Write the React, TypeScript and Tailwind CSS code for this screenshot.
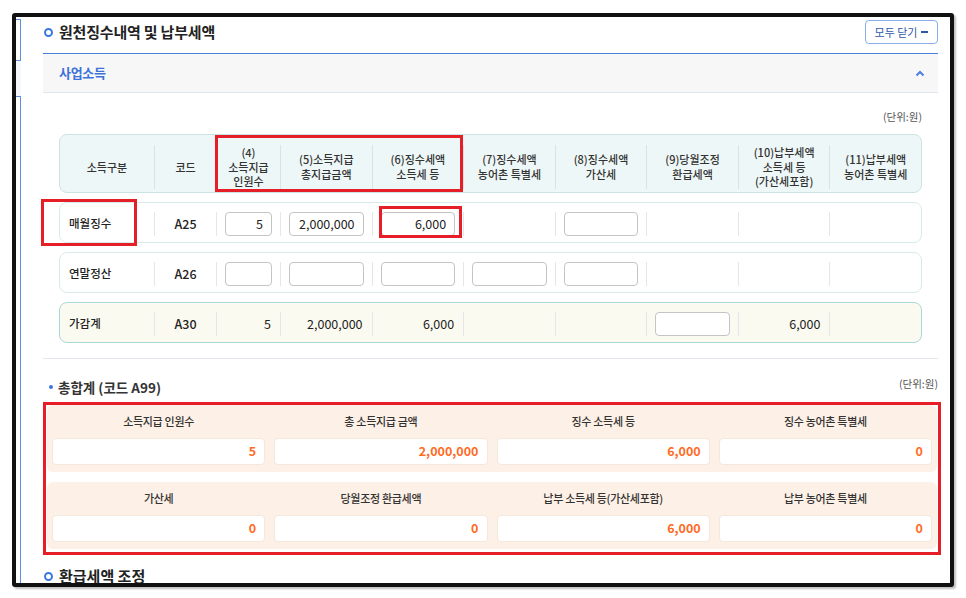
import React from "react";

type Cell =
  | { k: "label"; t: string }
  | { k: "code"; t: string }
  | { k: "input"; t: string; red?: boolean }
  | { k: "value"; t: string }
  | { k: "empty" };

const headers: string[][] = [
  ["소득구분"],
  ["코드"],
  ["(4)", "소득지급", "인원수"],
  ["(5)소득지급", "총지급금액"],
  ["(6)징수세액", "소득세 등"],
  ["(7)징수세액", "농어촌 특별세"],
  ["(8)징수세액", "가산세"],
  ["(9)당월조정", "환급세액"],
  ["(10)납부세액", "소득세 등", "(가산세포함)"],
  ["(11)납부세액", "농어촌 특별세"],
];

const rows: { cells: Cell[]; total?: boolean }[] = [
  {
    cells: [
      { k: "label", t: "매월징수" },
      { k: "code", t: "A25" },
      { k: "input", t: "5" },
      { k: "input", t: "2,000,000" },
      { k: "input", t: "6,000", red: true },
      { k: "empty" },
      { k: "input", t: "" },
      { k: "empty" },
      { k: "empty" },
      { k: "empty" },
    ],
  },
  {
    cells: [
      { k: "label", t: "연말정산" },
      { k: "code", t: "A26" },
      { k: "input", t: "" },
      { k: "input", t: "" },
      { k: "input", t: "" },
      { k: "input", t: "" },
      { k: "input", t: "" },
      { k: "empty" },
      { k: "empty" },
      { k: "empty" },
    ],
  },
  {
    total: true,
    cells: [
      { k: "label", t: "가감계" },
      { k: "code", t: "A30" },
      { k: "value", t: "5" },
      { k: "value", t: "2,000,000" },
      { k: "value", t: "6,000" },
      { k: "empty" },
      { k: "empty" },
      { k: "input", t: "" },
      { k: "value", t: "6,000" },
      { k: "empty" },
    ],
  },
];

const totals1 = [
  ["소득지급 인원수", "5"],
  ["총 소득지급 금액", "2,000,000"],
  ["징수 소득세 등", "6,000"],
  ["징수 농어촌 특별세", "0"],
];
const totals2 = [
  ["가산세", "0"],
  ["당월조정 환급세액", "0"],
  ["납부 소득세 등(가산세포함)", "6,000"],
  ["납부 농어촌 특별세", "0"],
];

const GRID = "grid grid-cols-[94px_62px_64px_repeat(7,minmax(0,1fr))]";

function Ring() {
  return <span className="inline-block h-[9px] w-[9px] rounded-full border-[2.5px] border-[#3a78e0]" />;
}

function RowCell({ c, i }: { c: Cell; i: number }) {
  const sep = i > 0 ? "border-l border-[#e6e6e6]" : "";
  if (c.k === "label")
    return <div className={`my-[9px] flex items-center pl-[9px] text-[11.5px] font-medium text-[#222] ${sep}`}>{c.t}</div>;
  if (c.k === "code")
    return <div className={`my-[9px] flex items-center justify-center text-[12.5px] font-medium text-[#222] ${sep}`}>{c.t}</div>;
  if (c.k === "value")
    return <div className={`my-[9px] flex items-center justify-end pr-[9px] text-[12.5px] text-[#222] ${sep}`}>{c.t}</div>;
  if (c.k === "input")
    return (
      <div className={`relative my-[9px] flex items-center px-[8px] ${sep}`}>
        <div className="flex h-[24px] w-full items-center justify-end rounded-[4px] border border-[#c4c4c4] bg-white pr-[8px] text-[12.5px] text-[#222]">
          {c.t}
        </div>
        {c.red && (
          <div className="pointer-events-none absolute left-[6px] top-[-6px] h-[32px] w-[83px] border-[3px] border-[#e61e27]" />
        )}
      </div>
    );
  return <div className={`my-[9px] ${sep}`} />;
}

function TotalPanel({ items }: { items: string[][] }) {
  return (
    <div className="grid grid-cols-4 gap-x-[9px] rounded-[6px] bg-[#fdf0e6] px-[5px] pb-[7px] pt-[8px]">
      {items.map(([l, v]) => (
        <div key={l} className="flex flex-col">
          <div className="text-center text-[11px] font-medium leading-[16px] tracking-[-0.3px] text-[#333]">{l}</div>
          <div className="mt-[9px] flex h-[27px] items-center justify-end rounded-[4px] border border-[#f6e7db] bg-white pr-[8px] text-[12.5px] font-semibold text-[#ff6a1f]">
            {v}
          </div>
        </div>
      ))}
    </div>
  );
}

export default function App() {
  return (
    <div className="h-[598px] w-[966px] bg-white pl-[12px] pt-[13px] font-['Noto_Sans_CJK_KR','Noto_Sans',sans-serif] text-[11px]">
      <div className="flex h-[574px] w-[942px] overflow-hidden rounded-[3px] border-[4px] border-[#111] bg-white shadow-[2px_2px_2px_rgba(0,0,0,0.25)]">
        {/* left strip */}
        <div className="flex w-[5px] shrink-0 flex-col">
          <div className="mt-[2px] h-[42px] border-y border-r border-[#5b8de0]" />
          <div className="h-[35px] bg-[#f5f7fa]" />
          <div className="flex-1 border-r border-t border-[#5b8de0]" />
        </div>

        {/* main */}
        <div className="ml-[22px] flex w-[895px] flex-col">
          {/* title */}
          <div className="flex h-[37px] shrink-0 items-center justify-between border-b border-[#4a7fdc] pb-[6px]">
            <div className="flex items-center gap-[6px] pl-[1px]">
              <Ring />
              <span className="text-[15px] font-bold tracking-[-0.2px] text-[#222]">원천징수내역 및 납부세액</span>
            </div>
            <div className="flex h-[24px] w-[73px] items-center justify-center gap-[4px] rounded-[4px] border border-[#8aaeea] text-[11px] text-[#2f5aa8]">
              <span>모두 닫기</span>
              <span className="inline-block h-[2px] w-[7px] bg-[#2f5aa8]" />
            </div>
          </div>

          {/* accordion header */}
          <div className="flex h-[39px] shrink-0 items-center justify-between border-b border-[#e1e7ef] bg-[#f7f7f8] pl-[16px] pr-[13px]">
            <span className="text-[13px] font-bold tracking-[-0.3px] text-[#3d72d8]">사업소득</span>
            <svg width="10" height="7" viewBox="0 0 10 7">
              <polyline points="1.5,5.5 5,2 8.5,5.5" fill="none" stroke="#4c7fdc" strokeWidth="2" />
            </svg>
          </div>

          {/* accordion body */}
          <div className="shrink-0 border-b border-[#e4e8ee] px-[16px] pb-[15px] pt-[17px]">
            <div className="text-right text-[10.5px] leading-[14px] text-[#555]">(단위:원)</div>
            <div className="relative mt-[10px]">
              {/* header */}
              <div className={`${GRID} h-[59px] rounded-[8px] border border-[#cde3e3] bg-[#eef7f7]`}>
                {headers.map((h, i) => (
                  <div
                    key={i}
                    className={`my-[10px] flex flex-col items-center justify-center text-center font-medium leading-[14.5px] text-[#333] ${
                      i > 0 ? "border-l border-[#d4e5e5]" : ""
                    }`}
                  >
                    {h.map((line) => (
                      <span key={line} className="whitespace-nowrap">
                        {line}
                      </span>
                    ))}
                  </div>
                ))}
              </div>

              {rows.map((r, ri) => (
                <div
                  key={ri}
                  className={`${GRID} mt-[9px] h-[41px] rounded-[8px] border ${
                    r.total ? "border-[#a8d8d8] bg-[#fbfaf1]" : "border-[#d8ebeb] bg-white"
                  }`}
                >
                  {r.cells.map((c, i) => (
                    <RowCell key={i} c={c} i={i} />
                  ))}
                </div>
              ))}

              {/* annotations */}
              <div className="pointer-events-none absolute left-[156px] top-[1px] h-[57px] w-[248px] border-[3px] border-[#e61e27]" />
              <div className="pointer-events-none absolute left-[-18px] top-[65px] h-[47px] w-[96px] border-[3px] border-[#e61e27]" />
            </div>
          </div>

          {/* total section */}
          <div className="mt-[19px] flex h-[18px] shrink-0 items-center justify-between">
            <div className="flex items-center gap-[5px]">
              <span className="ml-[6px] inline-block h-[4px] w-[4px] rounded-full bg-[#3a78e0]" />
              <span className="text-[13.5px] font-bold text-[#333]">총합계 (코드 A99)</span>
            </div>
            <span className="-mt-[7px] text-[10.5px] text-[#555]">(단위:원)</span>
          </div>

          <div className="mt-[6px] flex w-[898px] shrink-0 flex-col gap-[10px] border-[3px] border-[#e61e27] px-[1px] pb-[3px]">
            <TotalPanel items={totals1} />
            <TotalPanel items={totals2} />
          </div>

          <div className="mt-[12px] flex h-[18px] shrink-0 items-center gap-[6px] pl-[1px]">
            <Ring />
            <span className="text-[15px] font-bold text-[#222]">환급세액 조정</span>
          </div>
        </div>
      </div>
    </div>
  );
}
